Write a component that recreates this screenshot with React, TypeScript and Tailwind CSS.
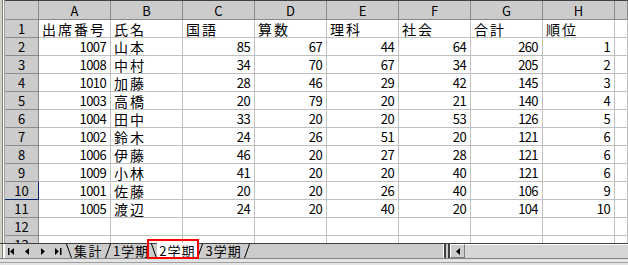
import React from 'react';

const COLS = ["A", "B", "C", "D", "E", "F", "G", "H"];
const TITLES = ["出席番号", "氏名", "国語", "算数", "理科", "社会", "合計", "順位"];

const ROWS: [number, string, number, number, number, number, number, number][] = [
  [1007, "山本", 85, 67, 44, 64, 260, 1],
  [1008, "中村", 34, 70, 67, 34, 205, 2],
  [1010, "加藤", 28, 46, 29, 42, 145, 3],
  [1003, "高橋", 20, 79, 20, 21, 140, 4],
  [1004, "田中", 33, 20, 20, 53, 126, 5],
  [1002, "鈴木", 24, 26, 51, 20, 121, 6],
  [1006, "伊藤", 46, 20, 27, 28, 121, 6],
  [1009, "小林", 41, 20, 20, 40, 121, 6],
  [1001, "佐藤", 20, 20, 26, 40, 106, 9],
  [1005, "渡辺", 24, 20, 40, 20, 104, 10],
];

const font = "font-['Noto_Sans_CJK_JP',sans-serif]";

// slanted tab edge
const Slant = ({ dir }: { dir: "l" | "r" }) => (
  <svg width="6" height="15" className="shrink-0">
    {dir === "l" ? (
      <line x1="0.5" y1="0" x2="5.5" y2="14" stroke="#000" strokeWidth="1" />
    ) : (
      <line x1="5.5" y1="0" x2="0.5" y2="14" stroke="#000" strokeWidth="1" />
    )}
  </svg>
);

const NavButton = ({ kind }: { kind: "first" | "prev" | "next" | "last" }) => (
  <div className="w-[15px] h-[15px] flex items-center justify-center">
    <svg width="9" height="7">
      {kind === "first" && (
        <>
          <rect x="0" y="0" width="1.5" height="7" fill="#000" />
          <polygon points="6,0 6,7 2,3.5" fill="#000" />
        </>
      )}
      {kind === "prev" && <polygon points="6,0 6,7 2,3.5" fill="#000" />}
      {kind === "next" && <polygon points="3,0 3,7 7,3.5" fill="#000" />}
      {kind === "last" && (
        <>
          <polygon points="2,0 2,7 6,3.5" fill="#000" />
          <rect x="7" y="0" width="1.5" height="7" fill="#000" />
        </>
      )}
    </svg>
  </div>
);

export default function App() {
  const cell = "border-r border-b border-[#c0c0c0] bg-white flex items-center overflow-hidden whitespace-nowrap leading-[14px] pt-[1px]";
  const head = "border-r border-b border-[#8a8a8a] bg-[#cccccc] flex items-center justify-center text-[13px] leading-[15px] text-black";
  const num = "justify-end pr-[4px] text-[13px] tracking-[-0.6px]";
  const jp = "pl-[3px] text-[14px] tracking-[2px]";

  return (
    <div className={`w-[628px] h-[265px] overflow-hidden bg-[#d4d0c8] flex flex-col relative ${font}`}>
      {/* sheet area */}
      <div className="flex h-[243px] overflow-hidden">
        {/* window frame */}
        <div className="w-[5px] shrink-0 flex">
          <div className="w-[2px] bg-[#d4d0c8]" />
          <div className="w-[1px] bg-[#808080]" />
          <div className="w-[1px] bg-[#ffffff]" />
          <div className="w-[1px] bg-[#a0a0a0]" />
        </div>
        <div className="flex-1 border-t border-[#404040] grid grid-cols-[34px_repeat(8,72px)_1fr] grid-rows-[19px_repeat(13,18px)] content-start">
          {/* header row */}
          <div className={head} />
          {COLS.map((c) => (
            <div key={c} className={head}>{c}</div>
          ))}
          <div className={head} />

          {/* titles */}
          <div className={head}>1</div>
          {TITLES.map((t) => (
            <div key={t} className={`${cell} ${jp}`}>{t}</div>
          ))}
          <div className={cell} />

          {ROWS.map((r, i) => (
            <React.Fragment key={i}>
              <div
                className={
                  i === 8
                    ? "border-r border-b border-[#0a246a] bg-[#cccccc] flex items-center justify-center text-[13px] leading-[15px] text-black"
                    : head
                }
              >
                {i + 2}
              </div>
              {r.map((v, j) => (
                <div key={j} className={`${cell} ${j === 1 ? jp : num}`}>{v}</div>
              ))}
              <div className={cell} />
            </React.Fragment>
          ))}

          {[12, 13].map((n) => (
            <React.Fragment key={n}>
              <div className={head}>{n}</div>
              {COLS.map((c) => (
                <div key={c} className={cell} />
              ))}
              <div className={cell} />
            </React.Fragment>
          ))}
        </div>
      </div>

      {/* sheet tabs + horizontal scrollbar */}
      <div className="h-[15px] flex border-t border-[#404040] bg-[#cccccc]">
        <div className="w-[5px] shrink-0 flex">
          <div className="w-[2px] bg-[#d4d0c8]" />
          <div className="w-[1px] bg-[#808080]" />
          <div className="w-[2px] bg-[#ffffff]" />
        </div>
        <div className="flex w-[61px] shrink-0">
          <NavButton kind="first" />
          <NavButton kind="prev" />
          <NavButton kind="next" />
          <NavButton kind="last" />
        </div>
        <div className="flex items-stretch text-[13px] leading-[14px] text-black">
          <Slant dir="l" />
          <div className="px-[2px] tracking-[1.5px] flex items-center">集計</div>
          <Slant dir="r" />
          <div className="px-[2px] tracking-[1px] flex items-center">1学期</div>
          <Slant dir="l" />
          <div className="px-[2px] tracking-[1px] flex items-center bg-white -mt-px">2学期</div>
          <Slant dir="r" />
          <div className="px-[2px] tracking-[1px] flex items-center">3学期</div>
          <Slant dir="r" />
        </div>
        <div className="flex-1" />
        {/* split box + scroll left */}
        <div className="w-[7px] shrink-0 flex">
          <div className="w-[1px] bg-[#ffffff]" />
          <div className="w-[2px] bg-[#404040]" />
          <div className="w-[2px] bg-[#cccccc]" />
          <div className="w-[2px] bg-[#404040]" />
        </div>
        <div className="w-[15px] shrink-0 border-l border-t border-white border-r border-b border-r-[#808080] border-b-[#808080] flex items-center justify-center">
          <svg width="4" height="7">
            <polygon points="4,0 4,7 0,3.5" fill="#000" />
          </svg>
        </div>
        <div className="w-[163px] shrink-0 bg-[#d6d6d6] border-t border-white" />
      </div>
      <div className="flex-1 flex flex-col border-t border-[#808080]">
        <div className="h-[3px] bg-[#e4e4e4]" />
        <div className="h-[1px] bg-[#a0a0a0]" />
        <div className="flex-1 bg-[#e4e4e4]" />
      </div>

      {/* red highlight box */}
      <div className="absolute left-[147px] top-[239px] w-[52px] h-[20px] border-2 border-[#ff0000] pointer-events-none" />
    </div>
  );
}
